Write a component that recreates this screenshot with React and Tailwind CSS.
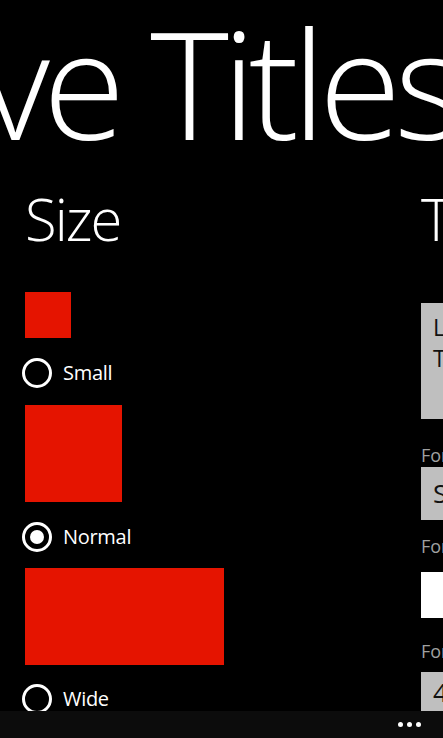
import React from "react";

const font = { fontFamily: '"Open Sans", "Segoe UI", sans-serif' };

function Radio({ checked, label }) {
  return (
    <div className="flex items-start h-full pt-[20px] ml-[-3px]">
      <div className="flex items-center">
        <div className="w-[30px] h-[30px] rounded-full border-[3px] border-white flex items-center justify-center">
          {checked && <div className="w-[14px] h-[14px] rounded-full bg-white" />}
        </div>
        <span className="ml-[11px] text-[20px] leading-[30px] text-white tracking-[-0.3px]">{label}</span>
      </div>
    </div>
  );
}

export default function App() {
  return (
    <div
      className="relative w-[443px] h-[738px] overflow-hidden bg-black text-white"
      style={font}
    >
      {/* Panorama title */}
      <div className="h-[155px] whitespace-nowrap pt-[7px]">
        <div className="ml-[-19px] text-[150px] leading-[150px] font-light tracking-[-7px]">
          ve Titles
        </div>
      </div>

      <div className="flex">
        {/* Size section */}
        <div className="w-[421px] shrink-0 pl-[25px]">
          <div className="mt-[35px] h-[58px] text-[58px] leading-[58px] font-light tracking-[-2px]">Size</div>
          <div className="mt-[44px] w-[46px] h-[46px] bg-[#e51400]" />
          <div className="h-[67px]">
            <Radio label="Small" />
          </div>
          <div className="w-[97px] h-[97px] bg-[#e51400]" />
          <div className="h-[66px]">
            <Radio checked label="Normal" />
          </div>
          <div className="w-[199px] h-[97px] bg-[#e51400]" />
          <div className="h-[66px] mt-[-1px]">
            <Radio label="Wide" />
          </div>
        </div>

        {/* Text section */}
        <div className="w-[300px] shrink-0">
          <div className="mt-[35px] h-[58px] text-[58px] leading-[58px] font-light whitespace-nowrap tracking-[-2px]">Text</div>
          <div className="mt-[55px] h-[116px] bg-[#bfbfbf] pl-[12px] pt-[9px] text-[23px] leading-[31px] text-[#111]">
            <div>Live</div>
            <div>Titles</div>
          </div>
          <div className="mt-[24px] h-[24px] text-[18px] leading-[24px] text-[#a0a0a0] whitespace-nowrap">
            Font family
          </div>
          <div className="h-[53px] bg-[#bfbfbf] pl-[12px] flex items-center text-[26px] text-[#111]">
            Segoe WP
          </div>
          <div className="mt-[14px] h-[24px] text-[18px] leading-[24px] text-[#a0a0a0] whitespace-nowrap">
            Foreground
          </div>
          <div className="mt-[14px] h-[46px] bg-white" />
          <div className="mt-[21px] h-[24px] text-[18px] leading-[24px] text-[#a0a0a0] whitespace-nowrap">
            Font size
          </div>
          <div className="mt-[9px] h-[50px] bg-[#bfbfbf] pl-[12px] pt-[2px] text-[26px] leading-[36px] text-[#111]">
            48
          </div>
        </div>
      </div>

      {/* Application bar */}
      <div className="absolute left-0 right-0 bottom-0 h-[27px] bg-[#0c0c0c] flex items-center justify-end pr-[22px]">
        <div className="flex gap-[4px]">
          <div className="w-[5px] h-[5px] rounded-full bg-white" />
          <div className="w-[5px] h-[5px] rounded-full bg-white" />
          <div className="w-[5px] h-[5px] rounded-full bg-white" />
        </div>
      </div>
    </div>
  );
}
